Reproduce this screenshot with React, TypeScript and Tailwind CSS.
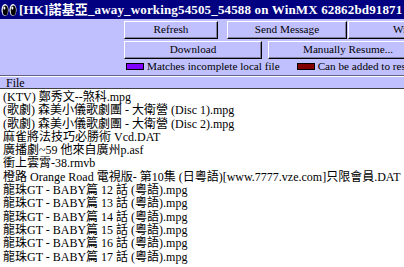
const files = [
  "(KTV) 鄭秀文--煞科.mpg",
  "(歌劇) 森美小儀歌劇團 - 大衛營 (Disc 1).mpg",
  "(歌劇) 森美小儀歌劇團 - 大衛營 (Disc 2).mpg",
  "麻雀將法技巧必勝術 Vcd.DAT",
  "廣播劇~59 他來自廣州p.asf",
  "衝上雲霄-38.rmvb",
  "橙路 Orange Road 電視版- 第10集 (日粵語)[www.7777.vze.com]只限會員.DAT",
  "龍珠GT - BABY篇 12 話 (粵語).mpg",
  "龍珠GT - BABY篇 13 話 (粵語).mpg",
  "龍珠GT - BABY篇 14 話 (粵語).mpg",
  "龍珠GT - BABY篇 15 話 (粵語).mpg",
  "龍珠GT - BABY篇 16 話 (粵語).mpg",
  "龍珠GT - BABY篇 17 話 (粵語).mpg",
];

function Btn({ label, className = "" }: { label: string; className?: string }) {
  return (
    <div
      className={`flex flex-none items-center justify-center border-t border-l border-white border-b border-r border-b-black border-r-black bg-[#c0c0ff] shadow-[inset_-1px_-1px_#8080a0] text-[11.2px] leading-none text-black ${className}`}
    >
      {label}
    </div>
  );
}

function Eyes() {
  return (
    <svg width="16" height="14" viewBox="0 0 16 14">
      <ellipse cx="4" cy="7" rx="3.5" ry="6" fill="#fff" />
      <ellipse cx="12" cy="7" rx="3.5" ry="6" fill="#fff" />
      <ellipse cx="4.3" cy="7.5" rx="2.6" ry="5" fill="#000" />
      <ellipse cx="12.3" cy="7.5" rx="2.6" ry="5" fill="#000" />
      <ellipse cx="3.4" cy="5" rx="1" ry="1.6" fill="#fff" />
      <ellipse cx="11.4" cy="5" rx="1" ry="1.6" fill="#fff" />
    </svg>
  );
}

export default function App() {
  return (
    <div
      className="flex h-[267px] w-[404px] flex-col overflow-hidden bg-[#c0c0ff] text-black"
      style={{ fontFamily: '"Liberation Serif", "Noto Sans CJK TC", serif' }}
    >
      <div className="flex h-[19px] flex-none items-center gap-[2px] overflow-hidden whitespace-nowrap bg-[#000080] pl-[1px] text-[13px] font-bold tracking-[0.15px] text-white">
        <Eyes />
        <span>[HK]諾基亞_away_working54505_54588 on WinMX 62862bd91871</span>
      </div>

      <div className="flex flex-none flex-col overflow-hidden pl-[124px] pt-[2px]">
        <div className="flex h-[18px]">
          <Btn label="Refresh" className="w-[94px]" />
          <Btn label="Send Message" className="ml-[9px] w-[120px]" />
          <Btn label="WinMX" className="ml-[1px] w-[100px] justify-start pl-[44px]" />
        </div>
        <div className="mt-[2px] flex h-[18px]">
          <Btn label="Download" className="w-[138px]" />
          <Btn label="Manually Resume..." className="ml-[6px] w-[160px]" />
        </div>
        <div className="flex h-[14px] items-center whitespace-nowrap text-[11.2px]">
          <span className="ml-[2px] h-[7px] w-[18px] flex-none border border-black bg-[#8000ff]" />
          <span className="ml-[3px]">Matches incomplete local file</span>
          <span className="ml-[17px] h-[7px] w-[18px] flex-none border border-black bg-[#800000]" />
          <span className="ml-[3px]">Can be added to resume list</span>
        </div>
      </div>

      <div className="mt-[2px] flex-none border-t border-t-[#606080] border-b border-b-white" />
      <div className="flex h-[12px] flex-none items-center border-b border-b-[#404040] pl-[6px] text-[12px]">
        File
      </div>
      <div className="flex-1 overflow-hidden bg-white pl-[3px] pt-[2px]">
        {files.map((f) => (
          <div key={f} className="whitespace-nowrap text-[12px] leading-[13.3px]">
            {f}
          </div>
        ))}
      </div>
    </div>
  );
}
